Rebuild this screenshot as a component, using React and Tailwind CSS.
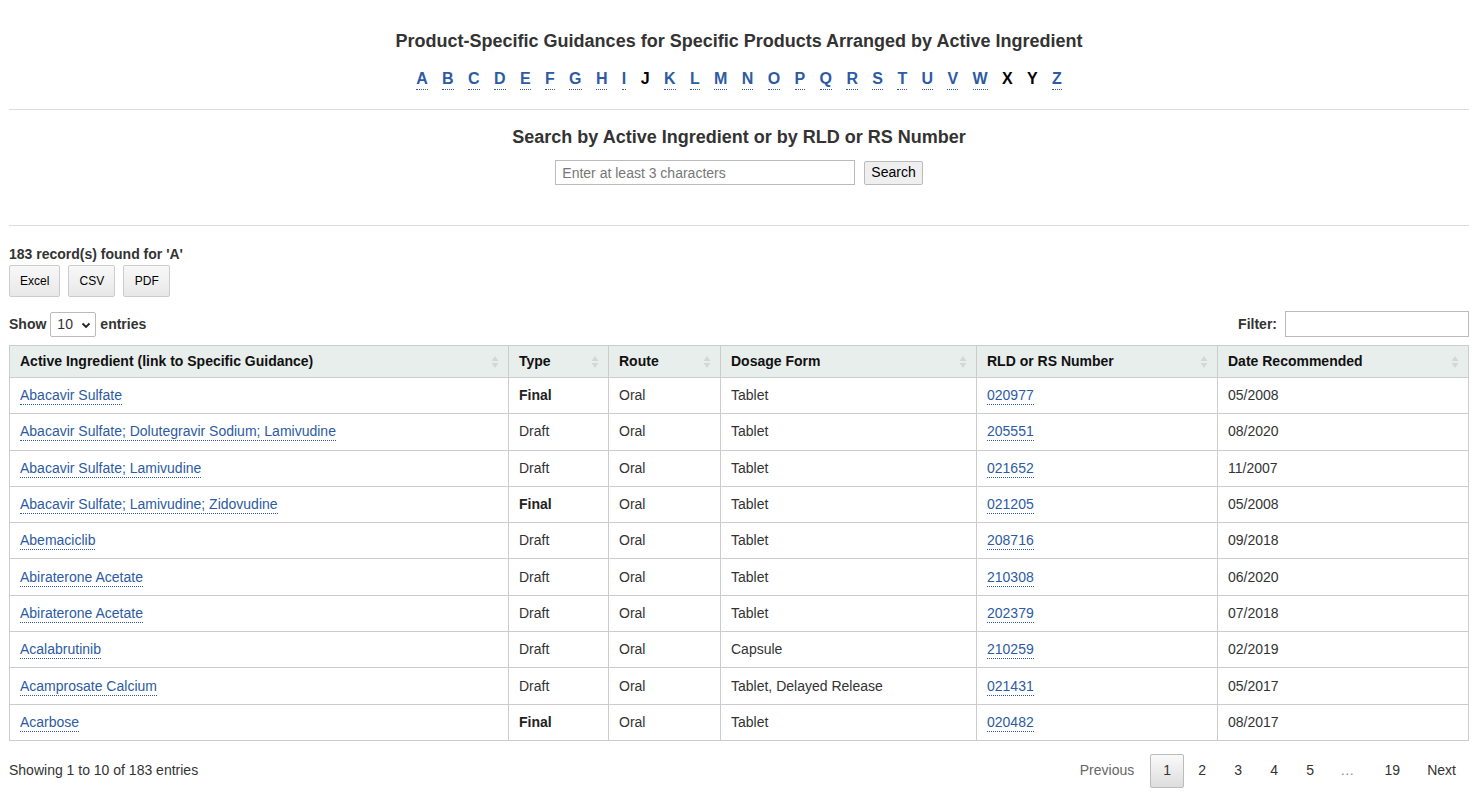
import React from "react";

const letters = "ABCDEFGHIJKLMNOPQRSTUVWXYZ".split("");
const inactive = ["J", "X", "Y"];

const rows = [
  ["Abacavir Sulfate", "Final", "Oral", "Tablet", "020977", "05/2008"],
  ["Abacavir Sulfate; Dolutegravir Sodium; Lamivudine", "Draft", "Oral", "Tablet", "205551", "08/2020"],
  ["Abacavir Sulfate; Lamivudine", "Draft", "Oral", "Tablet", "021652", "11/2007"],
  ["Abacavir Sulfate; Lamivudine; Zidovudine", "Final", "Oral", "Tablet", "021205", "05/2008"],
  ["Abemaciclib", "Draft", "Oral", "Tablet", "208716", "09/2018"],
  ["Abiraterone Acetate", "Draft", "Oral", "Tablet", "210308", "06/2020"],
  ["Abiraterone Acetate", "Draft", "Oral", "Tablet", "202379", "07/2018"],
  ["Acalabrutinib", "Draft", "Oral", "Capsule", "210259", "02/2019"],
  ["Acamprosate Calcium", "Draft", "Oral", "Tablet, Delayed Release", "021431", "05/2017"],
  ["Acarbose", "Final", "Oral", "Tablet", "020482", "08/2017"],
];

const columns = [
  { label: "Active Ingredient (link to Specific Guidance)", w: "w-[499px]" },
  { label: "Type", w: "w-[100px]" },
  { label: "Route", w: "w-[112px]" },
  { label: "Dosage Form", w: "w-[256px]" },
  { label: "RLD or RS Number", w: "w-[241px]" },
  { label: "Date Recommended", w: "" },
];

function SortIcon() {
  return (
    <svg width="8" height="14" viewBox="0 0 8 14" className="absolute right-[9px] top-1/2 -translate-y-1/2">
      <path d="M4 1 L7.5 6 H0.5 Z" fill="#d3d8d7" />
      <path d="M4 13 L7.5 8 H0.5 Z" fill="#d3d8d7" />
    </svg>
  );
}

function Link({ children }) {
  return (
    <a href="#" className="text-[#2d5ba3] no-underline border-b border-dotted border-[#2d5ba3] pb-[1px]">
      {children}
    </a>
  );
}

export default function App() {
  return (
    <div className="bg-white min-h-screen text-[#333] text-[14px] pl-[9px] pr-[12px] pb-6 font-['Liberation_Sans',Arial,sans-serif] overflow-hidden h-[802px]">
      {/* heading + alphabet */}
      <div className="pt-[30px] text-center">
        <h1 className="text-[18px] font-bold text-[#333] leading-[22px]">
          Product-Specific Guidances for Specific Products Arranged by Active Ingredient
        </h1>
        <div className="mt-[17px] flex justify-center text-[16px] font-bold leading-[20px]">
          {letters.map((l) =>
            inactive.includes(l) ? (
              <span key={l} className="mx-[7.2px] text-black">{l}</span>
            ) : (
              <a
                key={l}
                href="#"
                className="mx-[7.2px] text-[#2d5ba3] border-b border-dotted border-[#2d5ba3]"
              >
                {l}
              </a>
            )
          )}
        </div>
      </div>
      <hr className="mt-[19px] border-0 border-t border-[#ddd]" />

      {/* search */}
      <div className="text-center pt-[16px]">
        <h2 className="text-[18px] font-bold leading-[22px]">Search by Active Ingredient or by RLD or RS Number</h2>
        <div className="mt-[12px] flex justify-center items-center gap-[9px]">
          <input
            type="text"
            placeholder="Enter at least 3 characters"
            className="w-[300px] h-[25px] border border-[#bbb] px-[6px] text-[14px] placeholder:text-[#777] outline-none"
          />
          <button className="h-[24px] px-[6px] border border-[#bbb] bg-[#efefef] text-[14px] text-black rounded-[2px]">
            Search
          </button>
        </div>
      </div>
      <hr className="mt-[40px] border-0 border-t border-[#ddd]" />

      {/* results meta */}
      <div className="pt-[20px]">
        <div className="font-bold text-[14px] leading-[16px]">183 record(s) found for 'A'</div>
        <div className="mt-[3px] flex gap-[8px]">
          {["Excel", "CSV", "PDF"].map((b) => (
            <button
              key={b}
              className="h-[32px] px-[10px] min-w-[47px] border border-[#ccc] bg-gradient-to-b from-[#f8f8f8] to-[#e8e8e8] text-[12px] text-black rounded-[2px]"
            >
              {b}
            </button>
          ))}
        </div>
      </div>

      <div className="mt-[14px] flex justify-between items-center">
        <div className="flex items-center gap-[4px] font-bold text-[14px]">
          <span>Show</span>
          <div className="relative h-[25px] w-[46px] border border-[#bbb] rounded-[2px] flex items-center pl-[6px] font-normal">
            10
            <svg width="10" height="7" viewBox="0 0 10 7" className="absolute right-[4px] top-[9px]">
              <path d="M1.5 1.5 L5 5 L8.5 1.5" stroke="#222" strokeWidth="1.8" fill="none" />
            </svg>
          </div>
          <span>entries</span>
        </div>
        <div className="flex items-center gap-[8px] font-bold text-[14px]">
          <span>Filter:</span>
          <input type="text" className="w-[184px] h-[26px] border border-[#bbb] outline-none" />
        </div>
      </div>

      {/* table */}
      <table className="mt-[8px] w-full border-collapse border border-[#ccc] text-[14px]">
        <thead>
          <tr className="bg-[#e7eeec]">
            {columns.map((c) => (
              <th
                key={c.label}
                className={`${c.w} relative h-[32px] border border-[#ccc] text-left font-bold px-[10px] text-[#111]`}
              >
                {c.label}
                <SortIcon />
              </th>
            ))}
          </tr>
        </thead>
        <tbody>
          {rows.map((r, i) => (
            <tr key={i}>
              <td className="h-[36.3px] border border-[#ccc] px-[10px]">
                <Link>{r[0]}</Link>
              </td>
              <td className={`border border-[#ccc] px-[10px] ${r[1] === "Final" ? "font-bold text-[#222]" : ""}`}>{r[1]}</td>
              <td className="border border-[#ccc] px-[10px]">{r[2]}</td>
              <td className="border border-[#ccc] px-[10px]">{r[3]}</td>
              <td className="border border-[#ccc] px-[10px]">
                <Link>{r[4]}</Link>
              </td>
              <td className="border border-[#ccc] px-[10px]">{r[5]}</td>
            </tr>
          ))}
        </tbody>
      </table>

      {/* footer */}
      <div className="mt-[13px] flex justify-between items-center">
        <div className="text-[14px] text-[#333]">Showing 1 to 10 of 183 entries</div>
        <div className="flex items-center text-[14px] text-[#333]">
          <span className="px-[12px] text-[#666]">Previous</span>
          <span className="ml-[4px] w-[34px] h-[34px] flex items-center justify-center border border-[#bbb] rounded-[2px] bg-gradient-to-b from-[#fafafa] to-[#dddddd]">
            1
          </span>
          {["2", "3", "4", "5"].map((p) => (
            <span key={p} className="w-[36px] text-center">{p}</span>
          ))}
          <span className="w-[38px] text-center text-[#888]">…</span>
          <span className="w-[52px] text-center">19</span>
          <span className="pl-[9px] pr-[13px]">Next</span>
        </div>
      </div>
    </div>
  );
}
